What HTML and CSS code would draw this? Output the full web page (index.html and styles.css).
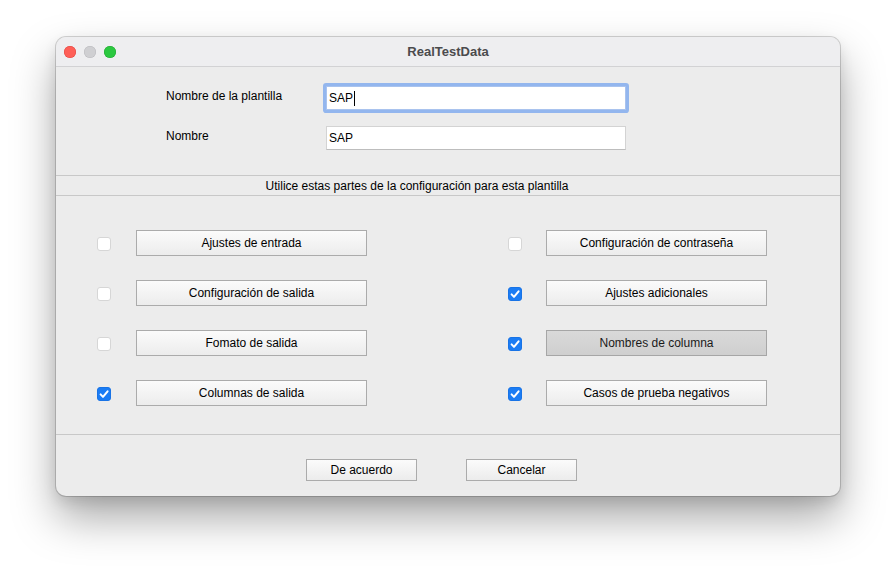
FILE: index.html
```html
<!DOCTYPE html>
<html lang="es">
<head>
<meta charset="utf-8">
<title>RealTestData</title>
<link rel="stylesheet" href="styles.css">
</head>
<body>
<div class="stage">
  <div class="window">
    <div class="titlebar">
      <div class="lights">
        <span class="light red"></span>
        <span class="light gray"></span>
        <span class="light green"></span>
      </div>
      <div class="title">RealTestData</div>
    </div>

    <div class="form">
      <div class="form-row">
        <div class="label">Nombre de la plantilla</div>
        <div class="field focused">SAP<span class="caret"></span></div>
      </div>
      <div class="form-row">
        <div class="label">Nombre</div>
        <div class="field">SAP</div>
      </div>
    </div>

    <div class="band"><span class="band-text">Utilice estas partes de la configuración para esta plantilla</span></div>

    <div class="options">
      <div class="opt left">
        <span class="check"></span>
        <button class="btn wide">Ajustes de entrada</button>
      </div>
      <div class="opt right">
        <span class="check"></span>
        <button class="btn narrow">Configuración de contraseña</button>
      </div>
      <div class="opt left">
        <span class="check"></span>
        <button class="btn wide">Configuración de salida</button>
      </div>
      <div class="opt right">
        <span class="check on"><svg viewBox="0 0 14 14" width="14" height="14"><path d="M3.6 7.4 L6 9.9 L10.6 4.3" fill="none" stroke="#fff" stroke-width="2" stroke-linecap="round" stroke-linejoin="round"/></svg></span>
        <button class="btn narrow">Ajustes adicionales</button>
      </div>
      <div class="opt left">
        <span class="check"></span>
        <button class="btn wide">Fomato de salida</button>
      </div>
      <div class="opt right">
        <span class="check on"><svg viewBox="0 0 14 14" width="14" height="14"><path d="M3.6 7.4 L6 9.9 L10.6 4.3" fill="none" stroke="#fff" stroke-width="2" stroke-linecap="round" stroke-linejoin="round"/></svg></span>
        <button class="btn narrow pressed">Nombres de columna</button>
      </div>
      <div class="opt left">
        <span class="check on"><svg viewBox="0 0 14 14" width="14" height="14"><path d="M3.6 7.4 L6 9.9 L10.6 4.3" fill="none" stroke="#fff" stroke-width="2" stroke-linecap="round" stroke-linejoin="round"/></svg></span>
        <button class="btn wide">Columnas de salida</button>
      </div>
      <div class="opt right">
        <span class="check on"><svg viewBox="0 0 14 14" width="14" height="14"><path d="M3.6 7.4 L6 9.9 L10.6 4.3" fill="none" stroke="#fff" stroke-width="2" stroke-linecap="round" stroke-linejoin="round"/></svg></span>
        <button class="btn narrow">Casos de prueba negativos</button>
      </div>
    </div>

    <div class="footer">
      <button class="btn action">De acuerdo</button>
      <button class="btn action">Cancelar</button>
    </div>
  </div>
</div>
</body>
</html>
```

FILE: styles.css
```css
* { box-sizing: border-box; }

html, body {
  margin: 0;
  padding: 0;
  background: #ffffff;
  font-family: "Liberation Sans", Arial, sans-serif;
  font-size: 12px;
  color: #000;
}

.stage {
  height: 570px;
  padding: 37px 56px 0;
}

.window {
  width: 784px;
  height: 459px;
  background: #ececec;
  border-radius: 10px;
  overflow: hidden;
  box-shadow: 0 0 0 1px rgba(0, 0, 0, 0.16), 0 22px 44px rgba(0, 0, 0, 0.34), 0 6px 14px rgba(0, 0, 0, 0.10);
  display: flex;
  flex-direction: column;
}

.titlebar {
  height: 30px;
  flex: none;
  background: #eeeef0;
  border-bottom: 1px solid #d2d2d4;
  display: flex;
  align-items: center;
  position: relative;
}

.lights {
  display: flex;
  gap: 8px;
  padding-left: 8px;
}

.light {
  width: 12px;
  height: 12px;
  border-radius: 50%;
  display: block;
}
.light.red { background: #fe5f57; box-shadow: inset 0 0 0 0.5px #e0443e; }
.light.gray { background: #cfcfd2; box-shadow: inset 0 0 0 0.5px #b9b9bd; }
.light.green { background: #2bc840; box-shadow: inset 0 0 0 0.5px #1fa52f; }

.title {
  position: absolute;
  left: 0;
  right: 0;
  top: 0;
  bottom: 0;
  display: flex;
  align-items: center;
  justify-content: center;
  font-weight: bold;
  font-size: 13px;
  color: #4b4b4d;
  pointer-events: none;
}

.form {
  flex: none;
  height: 108px;
  padding: 19px 0 0 110px;
  display: flex;
  flex-direction: column;
  gap: 16px;
}

.form-row {
  display: flex;
  align-items: flex-start;
  height: 24px;
}

.label {
  width: 160px;
  padding-top: 3px;
  line-height: 14px;
}

.field {
  width: 300px;
  height: 24px;
  background: #fff;
  border: 1px solid #d3d3d3;
  border-bottom-color: #bdbdbd;
  padding: 0 2px;
  display: flex;
  align-items: center;
  font-size: 12px;
}

.field.focused {
  border-color: #a9c3ee;
  box-shadow: 0 0 0 3px #93b6ee;
  border-radius: 1px;
}

.caret {
  display: inline-block;
  width: 1px;
  height: 15px;
  background: #000;
  margin-left: 1px;
}

.band {
  flex: none;
  height: 21px;
  border-top: 1px solid #c8c8c8;
  border-bottom: 1px solid #c8c8c8;
  display: flex;
  align-items: center;
  justify-content: center;
  padding-right: 62px;
}

.band-text {
  font-size: 12px;
}

.options {
  flex: none;
  height: 239px;
  padding: 34px 0 0 41px;
  display: grid;
  grid-template-columns: 270px 259px;
  column-gap: 141px;
  row-gap: 24px;
  grid-auto-rows: 26px;
  border-bottom: 1px solid #c8c8c8;
}

.opt {
  display: flex;
  align-items: center;
  gap: 25px;
}

.check {
  width: 14px;
  height: 14px;
  flex: none;
  border-radius: 3px;
  background: #fff;
  border: 1px solid #d6d6d6;
  margin-top: 2px;
  display: flex;
}

.check.on {
  background: #1b7cf4;
  border-color: #1873e6;
}
.check.on svg { margin: -1px; }

.opt.right { gap: 24px; }

.btn {
  font-family: "Liberation Sans", Arial, sans-serif;
  font-size: 12px;
  color: #000;
  height: 26px;
  border: 1px solid #ababab;
  border-radius: 0;
  background: linear-gradient(#fbfbfb, #ececec);
  padding: 0;
  margin: 0;
}

.btn.wide { width: 231px; }
.btn.narrow { width: 221px; }

.btn.pressed {
  background: linear-gradient(#d9d9d9, #cfcfcf);
  border-color: #a6a6a6;
  color: #1a1a1a;
}

.footer {
  flex: 1;
  display: flex;
  justify-content: center;
  align-items: flex-start;
  gap: 49px;
  padding-top: 24px;
  padding-right: 13px;
}

.btn.action {
  width: 111px;
  height: 22px;
}
```
